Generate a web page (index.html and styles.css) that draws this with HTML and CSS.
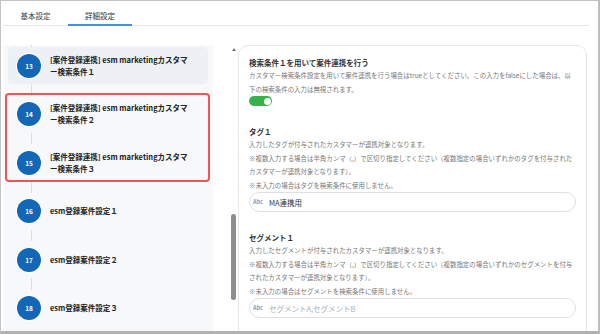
FILE: index.html
```html
<!DOCTYPE html>
<html lang="ja">
<head>
<meta charset="utf-8">
<title>詳細設定</title>
<link rel="stylesheet" href="styles.css">
</head>
<body>
<div class="frame">
  <div class="tabs">
    <div class="tab">基本設定</div>
    <div class="tab active">詳細設定</div>
  </div>
  <div class="main">
    <div class="steps">
      <div class="connector top"></div>
      <div class="step current"><span class="num">13</span><span class="label">[案件登録連携] esm marketingカスタマー検索条件１</span></div>
      <div class="connector"></div>
      <div class="step"><span class="num">14</span><span class="label">[案件登録連携] esm marketingカスタマー検索条件２</span></div>
      <div class="connector"></div>
      <div class="step"><span class="num">15</span><span class="label">[案件登録連携] esm marketingカスタマー検索条件３</span></div>
      <div class="connector"></div>
      <div class="step"><span class="num">16</span><span class="label">esm登録案件設定１</span></div>
      <div class="connector"></div>
      <div class="step"><span class="num">17</span><span class="label">esm登録案件設定２</span></div>
      <div class="connector"></div>
      <div class="step"><span class="num">18</span><span class="label">esm登録案件設定３</span></div>
      <div class="highlight"></div>
    </div>
    <div class="scroll"><span class="arrow"></span><span class="thumb"></span></div>
    <div class="card">
      <div class="section">
        <div class="title">検索条件１を用いて案件連携を行う</div>
        <div class="desc">カスタマー検索条件設定を用いて案件連携を行う場合はtrueとしてください。この入力をfalseにした場合は、以<br>下の検索条件の入力は無視されます。</div>
        <div class="toggle"><span class="knob"></span></div>
      </div>
      <div class="section">
        <div class="title">タグ１</div>
        <div class="desc">入力したタグが付与されたカスタマーが連携対象となります。<br>※複数入力する場合は半角カンマ（,）で区切り指定してください（複数指定の場合いずれかのタグを付与された<br>カスタマーが連携対象となります）。<br>※未入力の場合はタグを検索条件に使用しません。</div>
        <div class="input"><span class="abc">Abc</span><span class="value">MA連携用</span></div>
      </div>
      <div class="section">
        <div class="title">セグメント１</div>
        <div class="desc">入力したセグメントが付与されたカスタマーが連携対象となります。<br>※複数入力する場合は半角カンマ（,）で区切り指定してください（複数指定の場合いずれかのセグメントを付与<br>されたカスタマーが連携対象となります）。<br>※未入力の場合はセグメントを検索条件に使用しません。</div>
        <div class="input"><span class="abc">Abc</span><span class="placeholder">セグメントA,セグメントB</span></div>
      </div>
    </div>
  </div>
</div>
</body>
</html>
```
FILE: styles.css
```css
* { box-sizing: border-box; }
html, body { margin: 0; padding: 0; background: #fff; }
body { font-family: "Noto Sans CJK JP", "Noto Sans", sans-serif; color: #333; }

.frame {
  width: 600px;
  height: 334px;
  border: 1px solid #c4c4c4;
  border-right: 2px solid #bdbdbd;
  border-bottom: 3px solid #b2b2b2;
  display: flex;
  flex-direction: column;
  overflow: hidden;
}

.tabs {
  display: flex;
  height: 25px;
  margin: 0 9px 0 2px;
  border-bottom: 1px solid #e2e5e9;
}
.tab {
  width: 65px;
  font-size: 7.5px;
  line-height: 12px;
  padding-top: 9px;
  text-align: center;
  color: #444;
}
.tab.active {
  width: 64px;
  color: #333;
  border-bottom: 2px solid #4a8fd6;
  margin-bottom: -1px;
}

.main {
  flex: 1;
  display: flex;
  margin: 19px 11px 0 2px;
  overflow: hidden;
}

.steps {
  position: relative;
  width: 210px;
  flex: none;
  background: #f7f8fa;
  padding: 0 5px;
  overflow: hidden;
}
.connector {
  width: 1px;
  height: 11.6px;
  margin-left: 23px;
  background: #dcdfe4;
}
.connector.top { height: 2px; }
.step {
  height: 37px;
  display: flex;
  align-items: center;
  gap: 9px;
  padding-left: 9px;
  border-radius: 5px;
}
.step.current { background: #edf0f4; }
.num {
  flex: none;
  width: 24px;
  height: 24px;
  border-radius: 50%;
  background: #1466b6;
  box-shadow: 0 0 0 1px #fff;
  color: #fff;
  font-size: 6.5px;
  font-weight: 700;
  display: flex;
  align-items: center;
  justify-content: center;
}
.label {
  width: 142px;
  font-size: 7.5px;
  font-weight: 700;
  line-height: 12px;
  color: #222;
}
.highlight {
  position: absolute;
  left: 2px;
  top: 48px;
  width: 205px;
  height: 89px;
  border: 2px solid #f25454;
  border-radius: 4px;
}

.scroll {
  width: 25px;
  flex: none;
  display: flex;
  flex-direction: column;
  align-items: flex-start;
  padding-left: 18px;
}
.arrow {
  margin: 3px 0 0 1px;
  width: 0;
  height: 0;
  border-left: 2.5px solid transparent;
  border-right: 2.5px solid transparent;
  border-bottom: 3px solid #777;
}
.thumb {
  margin-top: 163px;
  width: 5px;
  height: 86px;
  border-radius: 3px;
  background: #8e8e8e;
}

.card {
  flex: 1;
  height: 320px;
  border: 1px solid #e3e6ea;
  border-radius: 10px;
  padding: 11px 10px 0;
  display: flex;
  flex-direction: column;
  gap: 20px;
}
.title {
  font-size: 7.5px;
  font-weight: 700;
  line-height: 12px;
  color: #333;
}
.desc {
  font-size: 6.45px;
  line-height: 13.5px;
  color: #777;
  white-space: nowrap;
}
.toggle {
  width: 23px;
  height: 10px;
  border-radius: 5px;
  background: #36b24f;
  display: flex;
  align-items: center;
  justify-content: flex-end;
  padding-right: 1.5px;
}
.knob {
  width: 7px;
  height: 7px;
  border-radius: 50%;
  background: #fff;
}
.input {
  height: 20px;
  border: 1px solid #dde0e5;
  border-radius: 10px;
  display: flex;
  align-items: center;
  padding-left: 3px;
  gap: 6px;
}
.abc {
  font-size: 5.5px;
  color: #8ea0bb;
  font-weight: 700;
}
.value { font-size: 7.5px; color: #333; }
.placeholder { font-size: 7.5px; color: #aab0ba; }
```
